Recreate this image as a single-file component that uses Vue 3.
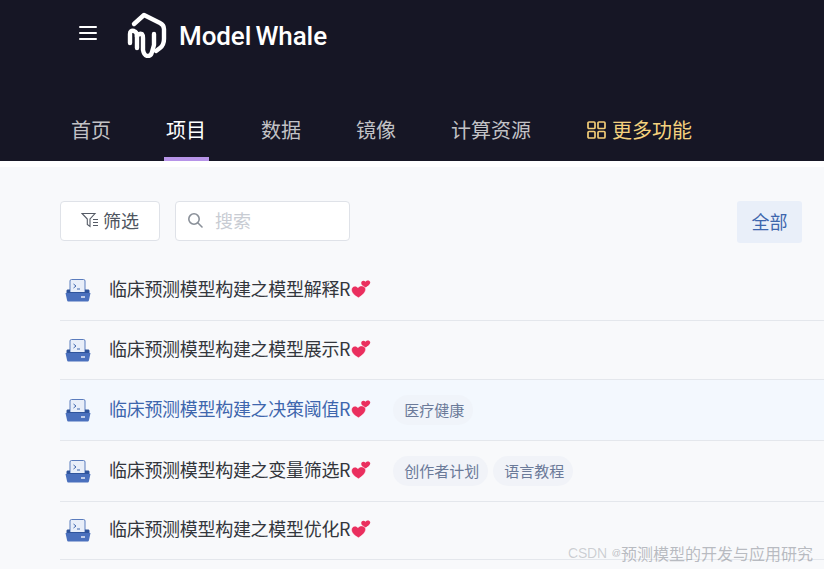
<script setup>
const tabs = [
  { label: '首页' },
  { label: '项目', active: true },
  { label: '数据' },
  { label: '镜像' },
  { label: '计算资源' },
]
const rows = [
  { title: '临床预测模型构建之模型解释R', tags: [], h: 61 },
  { title: '临床预测模型构建之模型展示R', tags: [], h: 59 },
  { title: '临床预测模型构建之决策阈值R', tags: ['医疗健康'], h: 61, hover: true },
  { title: '临床预测模型构建之变量筛选R', tags: ['创作者计划', '语言教程'], h: 61 },
  { title: '临床预测模型构建之模型优化R', tags: [], h: 58 },
]
</script>

<template>
  <div class="page">
    <header class="header">
      <div class="brand">
        <span class="burger"><i></i><i></i><i></i></span>
        <svg class="logo" width="40" height="46" viewBox="0 0 40 46" fill="none" stroke="#fff" stroke-width="4.4" stroke-linecap="round" stroke-linejoin="round">
          <path d="M7 12 L17 3 L33 11 Q37 13 37 17 V27 Q37 33 33 36 L29 39" />
          <path d="M3 31 V22 Q3 18 7 19 Q10 20 10 24 V36" />
          <path d="M10 24 Q12 21 15 22 Q16 23 16 26 V38 Q17 44 21 44 Q24 44 25 40 L27 33 V22" />
        </svg>
        <span class="brand-name">Model Whale</span>
      </div>
      <nav class="nav">
        <a v-for="t in tabs" :key="t.label" class="tab" :class="{ active: t.active }">{{ t.label }}</a>
        <a class="tab more">
          <svg width="19" height="18" viewBox="0 0 19 18" fill="none" stroke="#f3cd77" stroke-width="1.7">
            <rect x="1" y="1" width="7" height="6.5" rx="1" />
            <rect x="11" y="1" width="7" height="6.5" rx="1" />
            <rect x="1" y="10.5" width="7" height="6.5" rx="1" />
            <rect x="11" y="10.5" width="7" height="6.5" rx="1" />
          </svg>
          <span>更多功能</span>
        </a>
      </nav>
    </header>

    <main class="main">
      <div class="toolbar">
        <button class="filter">
          <svg width="19" height="16" viewBox="0 0 19 16" fill="none" stroke="#555b66" stroke-width="1.1">
            <path d="M1 1.5 H14 L9 7 V14.5 L6.3 12.5 V7 Z" />
            <path d="M12 7.5 H17 M12 10.5 H17 M12 13.5 H17" />
          </svg>
          <span>筛选</span>
        </button>
        <div class="search">
          <svg width="16" height="16" viewBox="0 0 16 16" fill="none" stroke="#8a9099" stroke-width="1.6">
            <circle cx="7" cy="7" r="5.2" />
            <path d="M11 11 L15 15" stroke-linecap="round" />
          </svg>
          <span class="placeholder">搜索</span>
        </div>
        <button class="all">全部</button>
      </div>

      <ul class="list">
        <li v-for="r in rows" :key="r.title" class="row" :class="{ hover: r.hover }" :style="{ height: r.h + 'px' }">
          <svg class="folder" width="26" height="23" viewBox="0 0 26 23" fill="none">
            <rect x="5" y="0.5" width="15" height="16" rx="1.5" fill="#e8eef9" stroke="#5a7cbd" stroke-width="1" />
            <path d="M8.5 5 L11 7 L8.5 9 M12 10 H15" stroke="#3f66ad" stroke-width="1" />
            <path d="M1.5 12 C1.5 11 2 10.5 3 10.5 H5 V13 H20 V10.5 H23 C24 10.5 24.5 11 24.5 12 V14 H1.5 Z" fill="#2f549c" />
            <path d="M0.5 14 H25.5 L24 21 C23.8 22 23.2 22.5 22.5 22.5 H3.5 C2.8 22.5 2.2 22 2 21 Z" fill="#4a70bd" />
            <path d="M16 18 H20" stroke="#fff" stroke-width="1.3" />
          </svg>
          <span class="title">{{ r.title }}</span>
          <svg class="hearts" width="20" height="20" viewBox="0 0 20 20">
            <path d="M14.5 8.5 C12 7.6 10 5.8 10.2 3.8 C10.5 1.6 13 1 14.5 2.8 C15.6 1 18.6 0.8 19.2 3 C19.6 5 17 7.2 14.5 8.5 Z" fill="#ea2f5e" />
            <path d="M7.5 18.8 C3.6 16.6 0.4 14 0.6 10.6 C0.8 7 5 6 7 8.8 C8.6 6 13.8 6.2 14.6 9.8 C15 13 11 16.6 7.5 18.8 Z" fill="#ea2f5e" stroke="#fff" stroke-width="0.4" />
          </svg>
          <span v-if="r.tags.length" class="tags">
            <span v-for="t in r.tags" :key="t" class="tag">{{ t }}</span>
          </span>
        </li>
      </ul>
    </main>

    <div class="watermark"><span class="wm-latin">CSDN</span><span class="wm-at">@</span><span>预测模型的开发与应用研究</span></div>
  </div>
</template>

<style>
html, body { margin: 0; padding: 0; background: #f8f9fb; overflow: hidden; }
</style>

<style scoped>
.page {
  position: relative;
  width: 824px;
  height: 569px;
  overflow: hidden;
  background: #f8f9fb;
  font-family: "Noto Sans CJK SC", "Liberation Sans", sans-serif;
}
.header {
  height: 161px;
  background: #161625;
  display: flex;
  flex-direction: column;
  justify-content: space-between;
}
.brand {
  display: flex;
  align-items: center;
  padding: 12px 0 0 79px;
}
.burger {
  display: flex;
  flex-direction: column;
  gap: 4px;
  width: 18px;
  margin-right: 30px;
  margin-top: -4px;
}
.burger i {
  display: block;
  height: 2px;
  background: #fff;
  border-radius: 1px;
}
.logo { margin-right: 13px; }
.brand-name {
  font-family: "Roboto", "Liberation Sans", sans-serif;
  font-size: 26px;
  font-weight: 500;
  color: #fff;
  letter-spacing: -0.1px;
  word-spacing: -2px;
  margin: 2px 0 0 -1px;
}
.nav {
  display: flex;
  padding-left: 71px;
  gap: 55px;
}
.tab {
  height: 47px;
  padding-top: 1px;
  box-sizing: border-box;
  display: flex;
  align-items: flex-start;
  font-size: 20px;
  line-height: 29px;
  color: #c2c2c6;
  position: relative;
}
.tab.active { color: #fff; }
.tab.active::after {
  content: "";
  position: absolute;
  left: -2px;
  right: -3px;
  bottom: 0;
  height: 4px;
  background: #b794e8;
}
.tab.more {
  color: #f5d27e;
  gap: 6px;
  padding-left: 1px;
}
.tab.more svg { margin-top: 6px; }
.main { padding: 0 0 0 60px; border-top: 6px solid #fff; }
.toolbar {
  display: flex;
  align-items: flex-start;
  box-sizing: border-box;
  padding: 34px 22px 0 0;
  height: 93px;
}
button { font-family: inherit; margin: 0; }
.filter {
  width: 100px;
  height: 40px;
  border: 1px solid #dfe2e8;
  border-radius: 4px;
  background: #fff;
  display: flex;
  align-items: center;
  justify-content: center;
  gap: 3px;
  font-size: 18px;
  color: #4f5560;
  padding: 0 0 2px;
}
.search {
  width: 175px;
  height: 40px;
  margin-left: 15px;
  box-sizing: border-box;
  border: 1px solid #dfe2e8;
  border-radius: 4px;
  background: #fff;
  display: flex;
  align-items: center;
  padding: 0 0 2px 11px;
  gap: 12px;
}
.placeholder { font-size: 18px; color: #c8ccd3; }
.all {
  margin-left: auto;
  width: 65px;
  height: 42px;
  border: 0;
  border-radius: 3px;
  background: #e9eff9;
  color: #3e66ad;
  font-size: 18px;
  padding: 0 0 2px;
}
.list { list-style: none; margin: 0; padding: 0; }
.row {
  display: flex;
  align-items: center;
  box-sizing: border-box;
  border-bottom: 1px solid #e4e7ec;
  padding: 0 0 5px 5px;
  color: #33363c;
}
.row.hover { background: #f3f8fe; color: #3e66ad; }
.folder { margin: 5px 18px 0 0; flex: none; }
.title { font-size: 18px; letter-spacing: -0.3px; white-space: nowrap; }
.hearts { flex: none; margin: 2px 0 0 1px; }
.tags { display: flex; gap: 5px; margin: 5px 0 0 22px; }
.tag {
  height: 30px;
  line-height: 30px;
  padding: 0 9px 0 11px;
  border-radius: 15px;
  background: #f1f3f8;
  font-size: 15px;
  color: #6b7a99;
}
.row.hover .tag { background: #f0f4fa; }
.watermark {
  position: absolute;
  right: 11px;
  bottom: 4px;
  display: flex;
  align-items: center;
  font-size: 16px;
  color: rgba(120, 125, 135, 0.5);
  white-space: nowrap;
}
.wm-latin {
  font-family: "Liberation Sans", sans-serif;
  font-size: 14px;
  letter-spacing: -0.2px;
  color: rgba(120, 125, 135, 0.35);
  margin-right: 5px;
}
.wm-at {
  font-family: "Liberation Sans", sans-serif;
  font-size: 9px;
}
</style>
